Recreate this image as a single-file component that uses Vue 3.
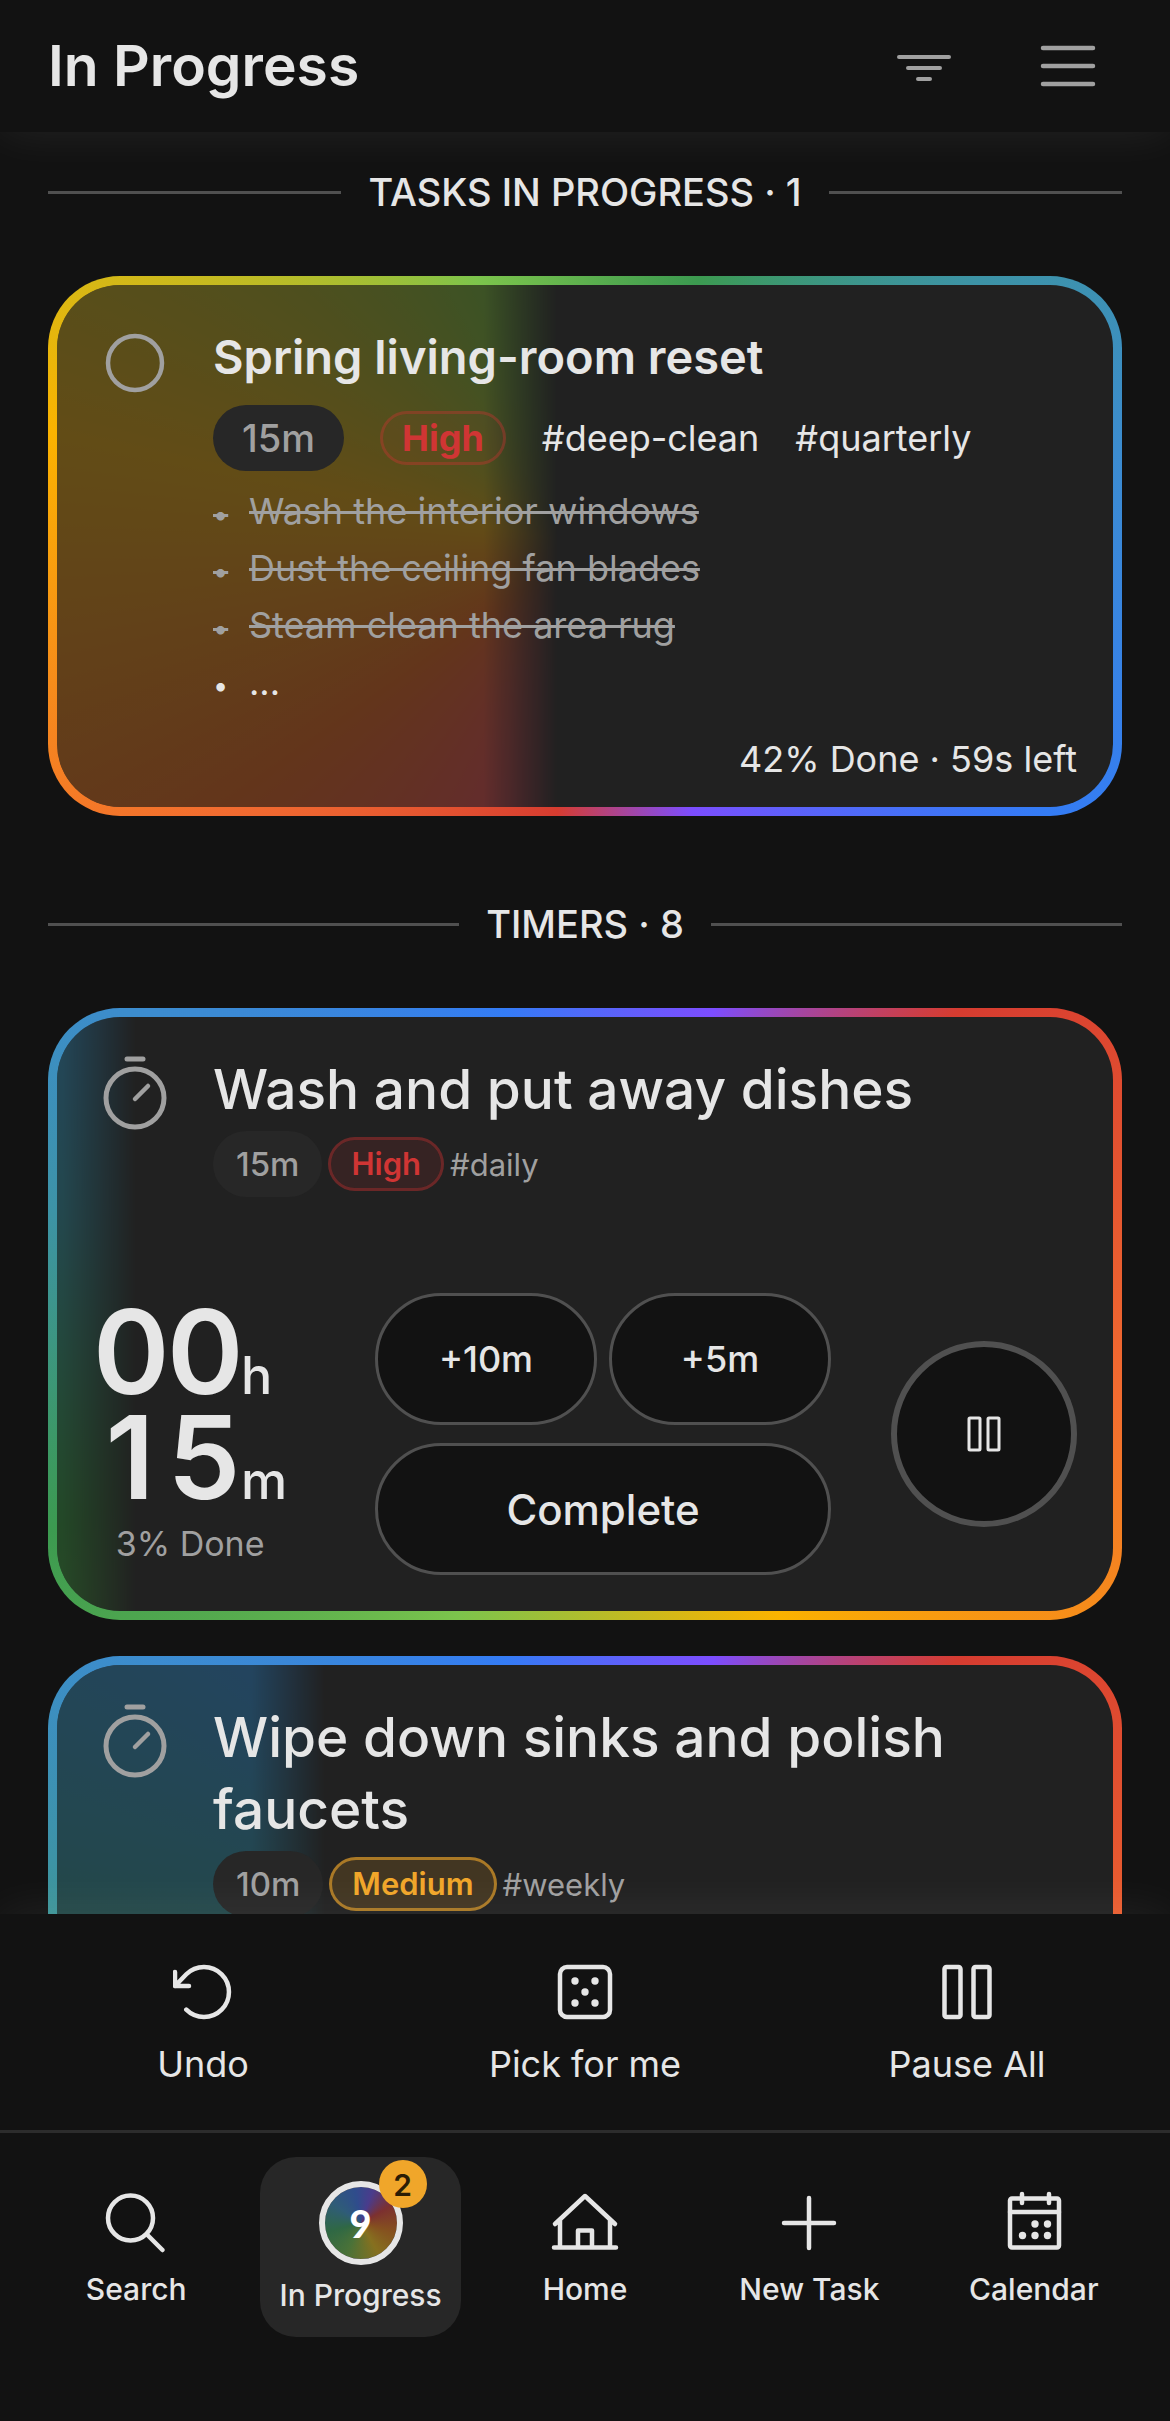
<template>
  <div class="screen">
    <header class="topbar">
      <h1>In Progress</h1>
      <div class="topbar-actions">
        <button type="button" class="icon-btn" aria-label="Filter">
          <svg width="72" height="72" viewBox="0 0 72 72">
            <path d="M11 27H61M20 38H52M30 49H42" stroke-width="4" />
          </svg>
        </button>
        <button type="button" class="icon-btn" aria-label="Menu">
          <svg width="72" height="72" viewBox="0 0 72 72">
            <path d="M11 18H61M11 36H61M11 54H61" stroke-width="4.5" />
          </svg>
        </button>
      </div>
    </header>

    <main class="content">
      <h2 class="section-title">Tasks in progress · 1</h2>

      <article class="card task-card">
        <div class="fill" :style="fillMask(task.progress)"></div>
        <div class="card-row">
          <button type="button" class="lead" aria-label="Mark as done">
            <svg width="60" height="60" viewBox="0 0 60 60">
              <circle cx="30" cy="30" r="27" stroke-width="4.5" />
            </svg>
          </button>
          <div class="card-body">
            <h3>{{ task.title }}</h3>
            <div class="tags">
              <span class="duration">{{ task.duration }}</span>
              <span class="priority high">{{ task.priority }}</span>
              <a v-for="tag in task.tags" :key="tag" href="#">{{ tag }}</a>
            </div>
            <ul class="subtasks">
              <li v-for="item in task.subtasks" :key="item.text" :class="{ done: item.done }">
                <span class="bullet">•</span>
                <span class="label">{{ item.text }}</span>
              </li>
            </ul>
          </div>
        </div>
        <p class="task-progress">{{ Math.round(task.progress) }}% Done · {{ task.left }} left</p>
      </article>

      <h2 class="section-title timers-title">Timers · 8</h2>

      <div class="timer-list">
        <article v-for="timer in timers" :key="timer.title" class="card timer-card">
          <div class="fill" :style="fillMask(timer.progress)"></div>
          <div class="card-row">
            <span class="lead">
              <svg width="66" height="78" viewBox="0 0 66 78">
                <path d="M25 6H41" stroke-width="5" />
                <circle cx="33" cy="45" r="29" stroke-width="5" />
                <path d="M33 46L46 33" stroke-width="4.5" />
              </svg>
            </span>
            <div class="card-body">
              <h3>{{ timer.title }}</h3>
              <div class="tags">
                <span class="duration">{{ timer.duration }}</span>
                <span :class="['priority', timer.priority.toLowerCase()]">{{ timer.priority }}</span>
                <a href="#">{{ timer.tag }}</a>
              </div>
            </div>
          </div>
          <div class="controls">
            <div class="clock">
              <div class="digits">
                <b v-for="(digit, i) in timer.hours" :key="i">{{ digit }}</b><small>h</small>
              </div>
              <div class="digits">
                <b v-for="(digit, i) in timer.minutes" :key="i">{{ digit }}</b><small>m</small>
              </div>
              <p>{{ Math.round(timer.progress) }}% Done</p>
            </div>
            <div class="buttons">
              <button type="button">+10m</button>
              <button type="button">+5m</button>
              <button type="button" class="complete">Complete</button>
            </div>
            <button type="button" class="pause" aria-label="Pause">
              <svg width="36" height="36" viewBox="0 0 36 36">
                <rect x="3" y="2" width="11" height="32" rx="1" stroke-width="3" />
                <rect x="22" y="2" width="11" height="32" rx="1" stroke-width="3" />
              </svg>
            </button>
          </div>
        </article>
      </div>
    </main>

    <footer class="bottom">
      <div class="actions">
        <button type="button">
          <svg width="60" height="60" viewBox="0 0 60 60">
            <path d="M2 10V24H16M2 24L13.3 12.3A25 25 0 1 1 13.3 47.7" />
          </svg>
          <span>Undo</span>
        </button>
        <button type="button">
          <svg width="60" height="60" viewBox="0 0 60 60">
            <rect x="5" y="5" width="50" height="50" rx="7" />
            <g class="dots">
              <circle cx="20" cy="19" r="3.7" />
              <circle cx="40" cy="19" r="3.7" />
              <circle cx="30" cy="30" r="3.7" />
              <circle cx="20" cy="41" r="3.7" />
              <circle cx="40" cy="41" r="3.7" />
            </g>
          </svg>
          <span>Pick for me</span>
        </button>
        <button type="button">
          <svg width="60" height="60" viewBox="0 0 60 60">
            <rect x="7.5" y="5" width="16" height="50" rx="2" />
            <rect x="36.5" y="5" width="16" height="50" rx="2" />
          </svg>
          <span>Pause All</span>
        </button>
      </div>

      <nav class="tabs">
        <a href="#">
          <svg width="72" height="72" viewBox="0 0 72 72">
            <circle cx="30.5" cy="31" r="22.5" />
            <path d="M47 47.5L62.5 63" />
          </svg>
          <span>Search</span>
        </a>
        <a href="#" class="active" aria-current="page">
          <div class="ring">9<span class="badge">2</span></div>
          <span>In Progress</span>
        </a>
        <a href="#">
          <svg width="72" height="72" viewBox="0 0 72 72">
            <path d="M6 37L36 9L66 37M11 33V60.5M61 33V60.5M5 60.5H67M29 60V43.5H43V60" />
          </svg>
          <span>Home</span>
        </a>
        <a href="#">
          <svg width="72" height="72" viewBox="0 0 72 72">
            <path d="M36 11V61M11 36H61" />
          </svg>
          <span>New Task</span>
        </a>
        <a href="#">
          <svg width="72" height="72" viewBox="0 0 72 72">
            <rect x="12" y="11.5" width="49" height="49" rx="2" />
            <path d="M12 25H61M24 7V16M51 7V16" />
            <g class="dots">
              <circle cx="37" cy="37" r="3.7" />
              <circle cx="49.5" cy="37" r="3.7" />
              <circle cx="24.5" cy="48.5" r="3.7" />
              <circle cx="37" cy="48.5" r="3.7" />
              <circle cx="49.5" cy="48.5" r="3.7" />
            </g>
          </svg>
          <span>Calendar</span>
        </a>
      </nav>
    </footer>
  </div>
</template>

<script setup>
import { ref } from 'vue';

const task = ref({
  title: 'Spring living-room reset',
  duration: '15m',
  priority: 'High',
  tags: ['#deep-clean', '#quarterly'],
  progress: 42.4,
  left: '59s',
  subtasks: [
    { text: 'Wash the interior windows', done: true },
    { text: 'Dust the ceiling fan blades', done: true },
    { text: 'Steam clean the area rug', done: true },
    { text: '...', done: false },
  ],
});

const timers = ref([
  {
    title: 'Wash and put away dishes',
    duration: '15m',
    priority: 'High',
    tag: '#daily',
    hours: '00',
    minutes: '15',
    progress: 2.5,
  },
  {
    title: 'Wipe down sinks and polish faucets',
    duration: '10m',
    priority: 'Medium',
    tag: '#weekly',
    hours: '00',
    minutes: '08',
    progress: 20.4,
  },
]);

// Colour fill fades out just past the progress point
const fillMask = (progress) => ({
  maskImage: `linear-gradient(to right, #000 ${progress - 2}%, transparent ${progress + 5}%)`,
});
</script>

<style>
body {
  background: #121212;
}
</style>

<style scoped>
.screen {
  display: flex;
  flex-direction: column;
  height: 100vh;
  background: #121212;
  color: #e6e6e6;
  font-family: Inter, "Liberation Sans", sans-serif;
  font-size: 36px;
}

h1,
h2,
h3,
p,
ul {
  margin: 0;
  padding: 0;
}

a {
  color: inherit;
  text-decoration: none;
}

button {
  margin: 0;
  padding: 0;
  border: 0;
  background: none;
  color: inherit;
  font: inherit;
}

svg {
  display: block;
  fill: none;
  stroke: currentColor;
  stroke-width: 4.5;
  stroke-linecap: round;
  stroke-linejoin: round;
}

.dots {
  fill: currentColor;
  stroke: none;
}

/* Header */
.topbar {
  position: relative;
  z-index: 1;
  display: flex;
  flex: none;
  align-items: center;
  justify-content: space-between;
  height: 132px;
  padding: 0 66px 0 48px;
  box-sizing: border-box;
  background: #121212;
  box-shadow: 0 0 48px rgba(255, 255, 255, 0.08);
}

.topbar h1 {
  font-size: 57px;
  font-weight: 600;
  line-height: 72px;
}

.topbar-actions {
  display: flex;
  gap: 72px;
  color: #a0a0a0;
}

/* Content */
.content {
  flex: 1;
  min-height: 0;
  padding: 36px 48px;
  overflow-y: auto;
  scrollbar-width: none;
}

.section-title {
  display: flex;
  align-items: center;
  gap: 27px;
  margin-bottom: 60px;
  font-size: 38px;
  font-weight: 500;
  line-height: 48px;
  text-transform: uppercase;
}

.section-title::before,
.section-title::after {
  content: "";
  flex: 1;
  height: 3px;
  background: #505050;
}

.timers-title {
  margin-top: 84px;
}

.card {
  --start: 23deg;
  position: relative;
  isolation: isolate;
  box-sizing: border-box;
  border: 9px solid transparent;
  border-radius: 72px;
  background:
    linear-gradient(#212121, #212121) padding-box,
    conic-gradient(from var(--start), #7c4dff 0deg, #d63c30 28deg, #f26c30 76deg, #fbb300 124deg, #7cc44c 180deg, #3c9a50 225deg, #3d93a6 258deg, #3c8cd0 282deg, #347cf5 322deg, #7c4dff 360deg) border-box;
}

.fill {
  position: absolute;
  inset: 0;
  z-index: -1;
  border-radius: 63px;
  background: conic-gradient(from var(--start), #7c4dff 0deg, #fa3c60 28deg, #fa6410 76deg, #f8b000 124deg, #7cc430 180deg, #2aa236 225deg, #2aa0b4 258deg, #2896f0 290deg, #347cf5 322deg, #7c4dff 360deg);
  opacity: 0.3;
}

.card-row {
  display: flex;
  gap: 36px;
}

.lead {
  display: flex;
  flex: none;
  justify-content: center;
  align-items: flex-start;
  width: 84px;
  color: #a0a0a0;
}

.card-body {
  flex: 1;
  min-width: 0;
}

.tags {
  display: flex;
  align-items: center;
}

.duration {
  border-radius: 33px;
  background: #272727;
  color: #a0a0a0;
  font-weight: 500;
  line-height: 66px;
}

.priority {
  border: 3px solid;
  border-radius: 27px;
  line-height: 48px;
  font-weight: 600;
}

.priority.high {
  border-color: rgba(208, 53, 52, 0.35);
  background: rgba(208, 53, 52, 0.12);
  color: #d03534;
}

.priority.medium {
  border-color: rgba(240, 166, 42, 0.6);
  background: rgba(240, 166, 42, 0.16);
  color: #f0a62a;
}

/* Task card */
.task-card {
  --start: 158deg;
  padding: 42px 36px 24px;
}

.task-card .lead {
  padding-top: 6px;
}

.task-card h3 {
  margin-bottom: 18px;
  font-size: 47px;
  font-weight: 600;
  line-height: 60px;
}

.task-card .tags {
  gap: 36px;
}

.task-card .duration {
  padding: 0 29px;
  font-size: 38px;
}

.task-card .priority {
  padding: 0 19px;
  background: rgba(208, 53, 52, 0.06);
  font-weight: 700;
}

.subtasks {
  margin-top: 12px;
  list-style: none;
}

.subtasks li {
  display: flex;
  align-items: baseline;
  line-height: 57px;
}

.bullet {
  width: 36px;
  font-size: 27px;
  line-height: 36px;
}

.done {
  color: #a0a0a0;
}

.done .bullet,
.done .label {
  text-decoration: line-through;
  text-decoration-thickness: 3px;
}

.task-progress {
  margin-top: 24px;
  line-height: 48px;
  text-align: right;
}

/* Timer cards */
.timer-list {
  display: flex;
  flex-direction: column;
  gap: 36px;
}

.timer-card {
  display: flex;
  flex-direction: column;
  justify-content: space-between;
  min-height: 612px;
  padding: 36px;
}

.timer-card h3 {
  margin-bottom: 6px;
  font-size: 55px;
  font-weight: 500;
  line-height: 72px;
}

.timer-card .tags {
  gap: 6px;
  color: #a0a0a0;
  font-size: 31px;
}

.timer-card .duration {
  padding: 0 23px;
  font-size: 33px;
}

.timer-card .priority {
  padding: 0 20px;
}

.controls {
  display: grid;
  grid-template-columns: 1fr 456px 186px;
  align-items: center;
  gap: 60px;
}

.clock {
  justify-self: start;
}

.digits {
  display: flex;
  align-items: baseline;
  font-size: 116px;
  line-height: 105px;
}

.digits b {
  width: 74px;
  font-weight: 600;
  text-align: center;
}

.digits small {
  font-size: 52px;
  font-weight: 500;
  line-height: 54px;
}

.clock p {
  margin-top: 10px;
  color: #a0a0a0;
  font-size: 34px;
  line-height: 48px;
  text-align: center;
}

.buttons {
  display: grid;
  grid-template-columns: 1fr 1fr;
  gap: 18px 12px;
}

.buttons button {
  height: 132px;
  border: 3px solid #505050;
  border-radius: 66px;
  background: #121212;
  font-weight: 500;
}

.buttons .complete {
  grid-column: span 2;
  font-size: 42px;
}

.pause {
  display: flex;
  align-items: center;
  justify-content: center;
  height: 186px;
  border: 6px solid #505050;
  border-radius: 50%;
  background: #121212;
}

/* Bottom bars */
.bottom {
  position: relative;
  z-index: 1;
  flex: none;
  background: #121212;
  box-shadow: 0 0 48px rgba(255, 255, 255, 0.08);
}

.actions {
  display: grid;
  grid-template-columns: repeat(3, 1fr);
  padding: 48px 12px 42px;
  border-bottom: 3px solid #2c2c2c;
}

.actions button {
  display: flex;
  flex-direction: column;
  align-items: center;
  gap: 18px;
  line-height: 48px;
}

.tabs {
  display: grid;
  grid-template-columns: repeat(5, 1fr);
  gap: 24px;
  padding: 24px 36px 84px;
}

.tabs a {
  display: flex;
  flex-direction: column;
  align-items: center;
  justify-content: center;
  gap: 12px;
  height: 180px;
  border-radius: 36px;
  font-size: 30px;
  font-weight: 500;
  line-height: 36px;
  white-space: nowrap;
}

.tabs .active {
  background: #272727;
}

.ring {
  position: relative;
  display: flex;
  align-items: center;
  justify-content: center;
  box-sizing: border-box;
  width: 84px;
  height: 84px;
  border: 6px solid #e6e6e6;
  border-radius: 50%;
  background: conic-gradient(from 20deg, #4a3c8c, #7c3030 40deg, #85501f 85deg, #86701f 130deg, #4a7238 185deg, #2f6844 235deg, #2f5c78 285deg, #2f4c8c 330deg, #4a3c8c) padding-box;
  color: #fff;
  font-family: Lato, sans-serif;
  font-size: 38px;
  font-weight: 900;
}

.badge {
  position: absolute;
  top: -27px;
  right: -30px;
  width: 48px;
  height: 48px;
  border-radius: 50%;
  background: #f0a62a;
  color: #2b1d05;
  font: 600 30px/50px Inter, sans-serif;
  text-align: center;
}
</style>
